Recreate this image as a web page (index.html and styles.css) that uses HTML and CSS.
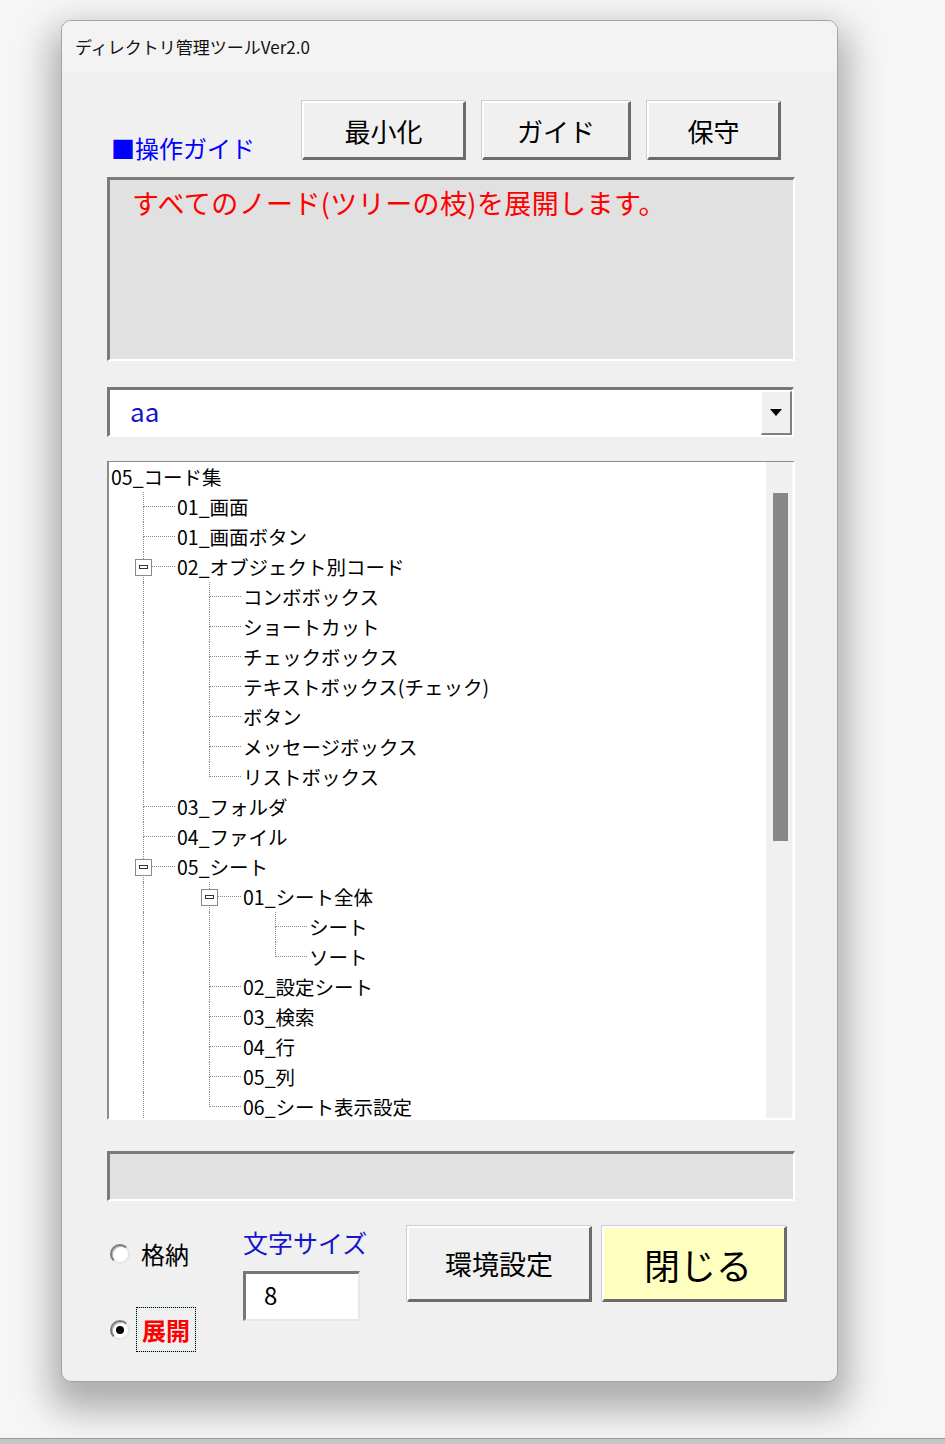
FILE: index.html
```html
<!DOCTYPE html>
<html lang="ja">
<head>
<meta charset="utf-8">
<title>ディレクトリ管理ツールVer2.0</title>
<link rel="stylesheet" href="styles.css">
</head>
<body>
<div class="screen">
  <div class="window">
    <div class="titlebar">ディレクトリ管理ツールVer2.0</div>
    <div class="content">
      <div class="top-row">
        <div class="guide-label">■操作ガイド</div>
        <button class="btn btn-min">最小化</button>
        <button class="btn btn-guide">ガイド</button>
        <button class="btn btn-maint">保守</button>
      </div>
      <div class="sunken guide-box">すべてのノード(ツリーの枝)を展開します。</div>
      <div class="combo">
        <span class="combo-text">aa</span>
        <span class="combo-btn"><span class="tri"></span></span>
      </div>
      <div class="tree">
        <div class="tree-body">
          <div class="row"><span class="t">05_コード集</span></div>
          <div class="row"><span class="c"><span class="u"></span><span class="d"></span></span><span class="t">01_画面</span></div>
          <div class="row"><span class="c"><span class="u"></span><span class="d"></span></span><span class="t">01_画面ボタン</span></div>
          <div class="row"><span class="c"><span class="u"></span><span class="d"></span><span class="box"><i></i></span></span><span class="t">02_オブジェクト別コード</span></div>
          <div class="row"><span class="p"><i></i></span><span class="c"><span class="u"></span><span class="d"></span></span><span class="t">コンボボックス</span></div>
          <div class="row"><span class="p"><i></i></span><span class="c"><span class="u"></span><span class="d"></span></span><span class="t">ショートカット</span></div>
          <div class="row"><span class="p"><i></i></span><span class="c"><span class="u"></span><span class="d"></span></span><span class="t">チェックボックス</span></div>
          <div class="row"><span class="p"><i></i></span><span class="c"><span class="u"></span><span class="d"></span></span><span class="t">テキストボックス(チェック)</span></div>
          <div class="row"><span class="p"><i></i></span><span class="c"><span class="u"></span><span class="d"></span></span><span class="t">ボタン</span></div>
          <div class="row"><span class="p"><i></i></span><span class="c"><span class="u"></span><span class="d"></span></span><span class="t">メッセージボックス</span></div>
          <div class="row"><span class="p"><i></i></span><span class="c"><span class="u"></span></span><span class="t">リストボックス</span></div>
          <div class="row"><span class="c"><span class="u"></span><span class="d"></span></span><span class="t">03_フォルダ</span></div>
          <div class="row"><span class="c"><span class="u"></span><span class="d"></span></span><span class="t">04_ファイル</span></div>
          <div class="row"><span class="c"><span class="u"></span><span class="d"></span><span class="box"><i></i></span></span><span class="t">05_シート</span></div>
          <div class="row"><span class="p"><i></i></span><span class="c"><span class="u"></span><span class="d"></span><span class="box"><i></i></span></span><span class="t">01_シート全体</span></div>
          <div class="row"><span class="p"><i></i></span><span class="p"><i></i></span><span class="c"><span class="u"></span><span class="d"></span></span><span class="t">シート</span></div>
          <div class="row"><span class="p"><i></i></span><span class="p"><i></i></span><span class="c"><span class="u"></span></span><span class="t">ソート</span></div>
          <div class="row"><span class="p"><i></i></span><span class="c"><span class="u"></span><span class="d"></span></span><span class="t">02_設定シート</span></div>
          <div class="row"><span class="p"><i></i></span><span class="c"><span class="u"></span><span class="d"></span></span><span class="t">03_検索</span></div>
          <div class="row"><span class="p"><i></i></span><span class="c"><span class="u"></span><span class="d"></span></span><span class="t">04_行</span></div>
          <div class="row"><span class="p"><i></i></span><span class="c"><span class="u"></span><span class="d"></span></span><span class="t">05_列</span></div>
          <div class="row"><span class="p"><i></i></span><span class="c"><span class="u"></span></span><span class="t">06_シート表示設定</span></div>
        </div>
        <div class="scroll"><div class="thumb"></div></div>
      </div>
      <div class="sunken status"></div>
      <div class="bottom-row">
        <div class="radios">
          <div class="radio-item first"><span class="radio"></span><span class="rlabel">格納</span></div>
          <div class="radio-item second"><span class="radio checked"><i></i></span><span class="rlabel focus">展開</span></div>
        </div>
        <div class="fontsize">
          <div class="fs-label">文字サイズ</div>
          <div class="fs-box">8</div>
        </div>
        <button class="btn btn-settings">環境設定</button>
        <button class="btn btn-close">閉じる</button>
      </div>
    </div>
  </div>
  <div class="spacer"></div>
  <div class="edge"></div>
</div>
</body>
</html>
```
FILE: styles.css
```css
* { box-sizing: border-box; }
html, body { margin: 0; padding: 0; }
body {
  width: 945px;
  height: 1444px;
  overflow: hidden;
  background: #f6f6f6;
  font-family: "Noto Sans CJK JP", "Noto Sans", sans-serif;
  color: #000;
}
.screen { height: 1444px; display: flex; flex-direction: column; }
.window {
  margin: 20px 0 0 61px;
  width: 777px;
  height: 1362px;
  flex: none;
  border: 1px solid #a4a4a4;
  border-radius: 10px;
  background: #f0f0f0;
  box-shadow: 0 18px 36px 10px rgba(0, 0, 0, 0.3);
}
.titlebar {
  height: 51px;
  padding-left: 13px;
  display: flex;
  align-items: center;
  font-size: 17px;
  color: #111;
  background: #f3f3f3;
  border-radius: 9px 9px 0 0;
  white-space: nowrap;
}
.content { padding-left: 45px; }

.top-row { display: flex; align-items: flex-start; margin-top: 29px; height: 59px; }
.guide-label {
  width: 191px;
  margin-left: 4px;
  margin-top: 32px;
  font-size: 24px;
  line-height: 30px;
  color: #0000ff;
  white-space: nowrap;
}
.btn {
  font-family: inherit;
  background: #f0f0f0;
  border-style: solid;
  border-width: 2px 3px 3px 2px;
  border-color: #fff #6b6b6b #6b6b6b #fff;
  box-shadow: -1px -1px 0 #cdcdcd;
  padding: 0;
  color: #000;
  flex: none;
}
.btn-min { width: 164px; height: 59px; font-size: 26px; }
.btn-guide { width: 149px; height: 59px; margin-left: 16px; font-size: 26px; }
.btn-maint { width: 134px; height: 59px; margin-left: 16px; font-size: 26px; }

.sunken {
  width: 688px;
  border-style: solid;
  border-width: 3px 2px 2px 3px;
  border-color: #7b7b7b #fff #fff #7b7b7b;
  background: #e1e1e1;
}
.guide-box {
  margin-top: 17px;
  height: 184px;
  padding: 6px 0 0 22px;
  color: #ff0000;
  font-size: 27px;
  letter-spacing: 0.4px;
  line-height: 34px;
  white-space: nowrap;
}

.combo {
  margin-top: 26px;
  width: 687px;
  height: 50px;
  display: flex;
  border-style: solid;
  border-width: 3px 2px 2px 3px;
  border-color: #777 #fff #fff #777;
  background: #fff;
}
.combo-text {
  flex: 1;
  padding-left: 20px;
  font-size: 26px;
  line-height: 41px;
  color: #1414cc;
}
.combo-btn {
  width: 31px;
  margin: 1px 0 0 0;
  flex: none;
  background: #f0f0f0;
  border-style: solid;
  border-width: 1px 2px 2px 1px;
  border-color: #fff #808080 #808080 #fff;
  display: flex;
  align-items: center;
  justify-content: center;
}
.tri {
  width: 0;
  height: 0;
  border-left: 6px solid transparent;
  border-right: 6px solid transparent;
  border-top: 7px solid #000;
}

.tree {
  margin-top: 24px;
  width: 688px;
  height: 659px;
  display: flex;
  border-style: solid;
  border-width: 1px 2px 2px 2px;
  border-color: #8c8c8c #fff #fff #8c8c8c;
}
.tree-body { flex: 1; overflow: hidden; background: #fff; }
.scroll { width: 27px; flex: none; background: #f0f0f0; border-right: 1px solid #fafafa; }
.thumb { margin: 31px 0 0 7px; width: 15px; height: 348px; background: #878787; }

.row {
  display: flex;
  height: 30px;
  padding-left: 2px;
  font-size: 19.5px;
  line-height: 29px;
  white-space: nowrap;
}
.t { flex: none; }
.p, .c { width: 66px; flex: none; }
.p i {
  display: block;
  width: 0;
  height: 100%;
  margin-left: 32px;
  border-left: 1px dotted #8a8a8a;
}
.c {
  display: grid;
  grid-template-columns: 66px;
  grid-template-rows: 15px 15px;
}
.c .u {
  grid-row: 1;
  grid-column: 1;
  margin-left: 32px;
  width: 32px;
  border-left: 1px dotted #8a8a8a;
  border-bottom: 1px dotted #8a8a8a;
}
.c .d {
  grid-row: 2;
  grid-column: 1;
  margin-left: 32px;
  width: 0;
  border-left: 1px dotted #8a8a8a;
}
.c .box {
  grid-row: 1 / 3;
  grid-column: 1;
  align-self: center;
  justify-self: start;
  margin-left: 24px;
  width: 17px;
  height: 17px;
  border: 1px solid #8a8a8a;
  background: #fff;
  display: flex;
  align-items: center;
  justify-content: center;
}
.c .box i { display: block; width: 9px; height: 4px; border: 1px solid #333; }

.status { margin-top: 31px; height: 50px; }

.bottom-row { display: flex; align-items: flex-start; margin-top: 20px; }
.radios { width: 136px; padding-left: 3px; display: flex; flex-direction: column; flex: none; }
.radio-item { display: flex; align-items: center; height: 45px; }
.radio-item.first { margin-top: 10px; }
.radio-item.second { margin-top: 31px; }
.radio {
  width: 20px;
  height: 20px;
  flex: none;
  border-radius: 50%;
  background: #fff;
  border: 2px solid;
  border-color: #7a7a7a #e4e4e4 #e4e4e4 #7a7a7a;
  box-shadow: inset 1px 1px 0 #b4b4b4;
  display: flex;
  align-items: center;
  justify-content: center;
}
.radio.checked i { display: block; width: 8px; height: 8px; border-radius: 50%; background: #000; }
.rlabel {
  margin-left: 6px;
  padding: 0 4px;
  height: 45px;
  border: 1px solid transparent;
  font-size: 24px;
  line-height: 43px;
  white-space: nowrap;
}
.rlabel.focus {
  color: #ff0000;
  font-weight: 700;
  padding: 0 5px;
  border-color: #a8e4e4;
  outline: 1px dotted #000;
  outline-offset: -1px;
}

.fontsize { width: 124px; flex: none; }
.fs-label {
  margin-top: 6px;
  font-size: 25px;
  line-height: 30px;
  color: #1414cc;
  white-space: nowrap;
}
.fs-box {
  margin-top: 14px;
  width: 117px;
  height: 50px;
  border-style: solid;
  border-width: 3px 2px 2px 3px;
  border-color: #777 #e8e8e8 #e8e8e8 #777;
  background: #fff;
  padding-left: 18px;
  font-size: 24px;
  line-height: 42px;
}
.btn-settings { margin: 5px 0 0 40px; width: 185px; height: 76px; font-size: 27px; }
.btn-close { margin: 5px 0 0 10px; width: 185px; height: 76px; font-size: 36px; padding-left: 8px; background: #ffffc0; }

.spacer { flex: 1; }
.edge { height: 6px; flex: none; background: #c6c6c6; border-top: 1px solid #999; }
```
